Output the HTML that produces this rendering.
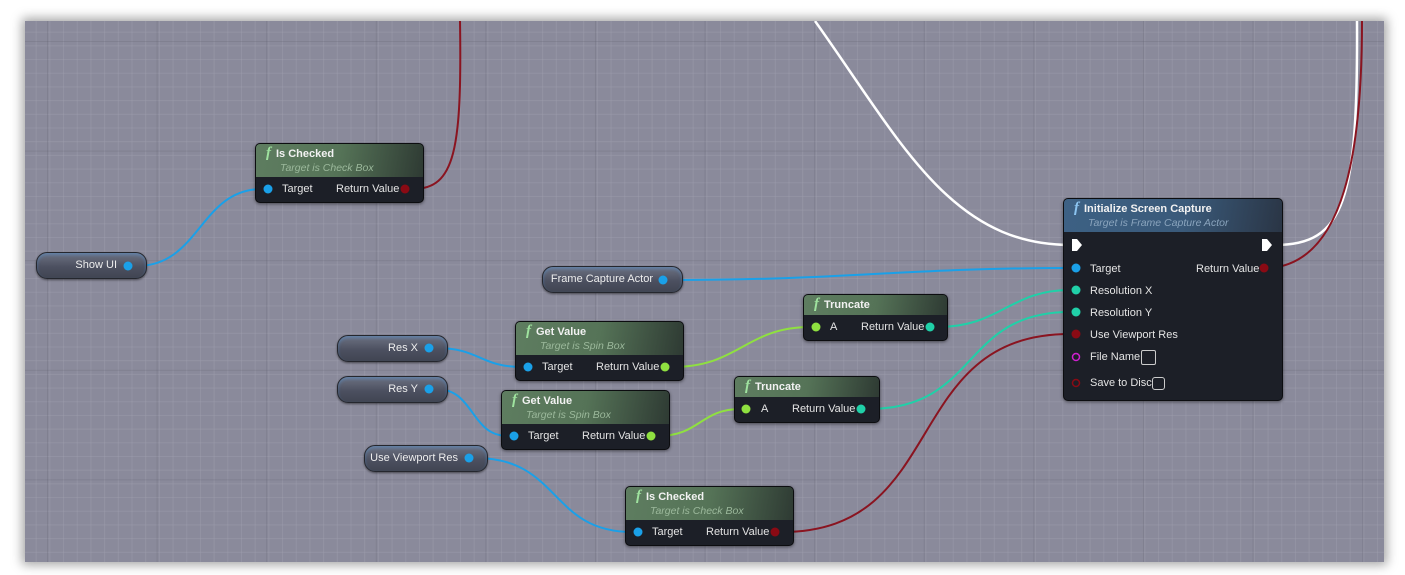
<!DOCTYPE html>
<html><head><meta charset="utf-8"><style>
*{margin:0;padding:0;box-sizing:border-box}
body{width:1405px;height:575px;background:#fff;position:relative;overflow:hidden;font-family:"Liberation Sans",sans-serif}
#cv{position:absolute;left:25px;top:21px;width:1359px;height:541px;background-color:#8a8a9b;
box-shadow:0 0 10px 3px rgba(0,0,0,.35);
background-image:
linear-gradient(to right,rgba(90,90,105,.22) 1px,transparent 1px),
linear-gradient(to bottom,rgba(90,90,105,.22) 1px,transparent 1px),
linear-gradient(to right,rgba(160,160,175,.4) 1px,transparent 1px),
linear-gradient(to bottom,rgba(160,160,175,.4) 1px,transparent 1px);
background-size:109.6px 109.6px,109.6px 109.6px,13.7px 13.7px,13.7px 13.7px;
background-position:22px 0,0 20px,-3px 0,0 -3px;overflow:hidden}
svg{position:absolute;left:0;top:0}
.n{position:absolute;background:#1c1f27;border:1px solid #0c0d10;border-radius:5px;box-shadow:0 1px 3px rgba(0,0,0,.5);color:#e6e6e6;font-size:11px}
.h{border-radius:4px 4px 0 0;background:linear-gradient(100deg,#5e7d60 0%,#557357 50%,#2e3a33 100%);padding:2px 0 0 10px;position:relative}
.h.b{background:linear-gradient(100deg,#3d6184 0%,#3a5a7a 55%,#2a3545 100%)}
.t{font-weight:bold;font-size:11px;color:#f2f2f2;line-height:14px}
.t i{font-family:"Liberation Serif",serif;font-style:italic;color:#9fe39f;font-size:15px;font-weight:bold;margin-right:5px}
.h.b .t i{color:#8cc4f0}
.s{font-style:italic;color:#9bb89b;font-size:10.5px;padding-left:14px;line-height:14px;padding-bottom:2px}
.h.b .s{color:#8aa4bd}
.r{position:absolute;font-size:11px;color:#e4e4e4;white-space:nowrap}
.v{position:absolute;border-radius:11px;border:1px solid #25272e;background:linear-gradient(#6d7282 0%,#4c5060 55%,#414552 100%);box-shadow:0 1px 2px rgba(0,0,0,.5),inset 0 2px 3px rgba(80,160,240,.35);color:#eee;font-size:11px;text-align:right;padding-right:29px;line-height:25px}
</style></head><body>
<div id="cv"></div>
<svg width="1405" height="575" viewBox="0 0 1405 575">
<defs><clipPath id="c"><rect x="25" y="21" width="1359" height="541"/></clipPath></defs>
<g clip-path="url(#c)" fill="none" stroke-width="2">
<path d="M413 189 C455 189 462 150 460 21" stroke="#8a1420"/>
<path d="M137 266 C200 266 200 189 262 189" stroke="#1aa0e8"/>
<path d="M815 21 C900 140 950 245 1070 245" stroke="#fff" stroke-width="2.5"/>
<path d="M1275 245 C1345 245 1358 200 1357 21" stroke="#fff" stroke-width="2.5"/>
<path d="M1270 268 C1345 262 1362 150 1362 21" stroke="#8a1420"/>
<path d="M670 280 C850 280 900 268 1070 268" stroke="#1aa0e8"/>
<path d="M436 348 C480 348 480 367 522 367" stroke="#1aa0e8"/>
<path d="M672 367 C740 367 745 327 811 327" stroke="#8fe040"/>
<path d="M938 327 C1000 327 1010 290 1070 290" stroke="#20d0a8"/>
<path d="M436 389 C475 389 470 436 508 436" stroke="#1aa0e8"/>
<path d="M658 436 C700 436 700 409 741 409" stroke="#8fe040"/>
<path d="M868 409 C980 409 960 312 1070 312" stroke="#20d0a8"/>
<path d="M476 458 C560 458 550 532 632 532" stroke="#1aa0e8"/>
<path d="M782 532 C950 532 900 334 1070 334" stroke="#8a1420"/>
</g>
</svg>

<div class="n" style="left:255px;top:143px;width:169px;height:60px"><div class="h"><div class="t"><i>f</i>Is Checked</div><div class="s">Target is Check Box</div></div>
<span class="r" style="left:26px;top:39px">Target</span><span class="r" style="left:80px;top:39px">Return Value</span></div>
<div class="v" style="left:36px;top:252px;width:111px;height:27px">Show UI</div>
<div class="v" style="left:542px;top:266px;width:141px;height:27px">Frame Capture Actor</div>
<div class="v" style="left:337px;top:335px;width:111px;height:27px">Res X</div>
<div class="v" style="left:337px;top:376px;width:111px;height:27px">Res Y</div>
<div class="v" style="left:364px;top:445px;width:124px;height:27px">Use Viewport Res</div>
<div class="n" style="left:803px;top:294px;width:145px;height:47px"><div class="h" style="padding-bottom:3px"><div class="t"><i>f</i>Truncate</div></div>
<span class="r" style="left:26px;top:26px">A</span><span class="r" style="left:57px;top:26px">Return Value</span></div>
<div class="n" style="left:734px;top:376px;width:146px;height:47px"><div class="h" style="padding-bottom:3px"><div class="t"><i>f</i>Truncate</div></div>
<span class="r" style="left:26px;top:26px">A</span><span class="r" style="left:57px;top:26px">Return Value</span></div>
<div class="n" style="left:515px;top:321px;width:169px;height:60px"><div class="h"><div class="t"><i>f</i>Get Value</div><div class="s">Target is Spin Box</div></div>
<span class="r" style="left:26px;top:39px">Target</span><span class="r" style="left:80px;top:39px">Return Value</span></div>
<div class="n" style="left:501px;top:390px;width:169px;height:60px"><div class="h"><div class="t"><i>f</i>Get Value</div><div class="s">Target is Spin Box</div></div>
<span class="r" style="left:26px;top:39px">Target</span><span class="r" style="left:80px;top:39px">Return Value</span></div>
<div class="n" style="left:625px;top:486px;width:169px;height:60px"><div class="h"><div class="t"><i>f</i>Is Checked</div><div class="s">Target is Check Box</div></div>
<span class="r" style="left:26px;top:39px">Target</span><span class="r" style="left:80px;top:39px">Return Value</span></div>
<div class="n" style="left:1063px;top:198px;width:220px;height:203px"><div class="h b"><div class="t"><i>f</i>Initialize Screen Capture</div><div class="s">Target is Frame Capture Actor</div></div>
<span class="r" style="left:26px;top:64px">Target</span><span class="r" style="left:132px;top:64px">Return Value</span>
<span class="r" style="left:26px;top:86px">Resolution X</span>
<span class="r" style="left:26px;top:108px">Resolution Y</span>
<span class="r" style="left:26px;top:130px">Use Viewport Res</span>
<span class="r" style="left:26px;top:152px">File Name</span>
<span class="r" style="left:26px;top:178px">Save to Disc</span>
<div style="position:absolute;left:77px;top:151px;width:15px;height:15px;border:1px solid #ccc;border-radius:2px"></div>
<div style="position:absolute;left:88px;top:178px;width:13px;height:13px;border:1.5px solid #ccc;border-radius:3px"></div>
</div>

<svg width="1405" height="575" viewBox="0 0 1405 575">
<g>
<path d="M1072 239 h5 l5 6 l-5 6 h-5z" fill="#fff"/>
<path d="M1262 239 h5 l5 6 l-5 6 h-5z" fill="#fff"/>
<g fill="#1aa0e8">
<circle cx="268" cy="189" r="4.5"/><circle cx="128" cy="266" r="4.5"/><circle cx="663" cy="280" r="4.5"/>
<circle cx="429" cy="348" r="4.5"/><circle cx="429" cy="389" r="4.5"/><circle cx="469" cy="458" r="4.5"/>
<circle cx="528" cy="367" r="4.5"/><circle cx="514" cy="436" r="4.5"/><circle cx="638" cy="532" r="4.5"/>
<circle cx="1076" cy="268" r="4.5"/></g>
<g fill="#8fe040"><circle cx="665" cy="367" r="4.5"/><circle cx="651" cy="436" r="4.5"/><circle cx="816" cy="327" r="4.5"/><circle cx="746" cy="409" r="4.5"/></g>
<g fill="#20d0a8"><circle cx="930" cy="327" r="4.5"/><circle cx="861" cy="409" r="4.5"/><circle cx="1076" cy="290" r="4.5"/><circle cx="1076" cy="312" r="4.5"/></g>
<g fill="#8a0a14"><circle cx="405" cy="189" r="4.5"/><circle cx="775" cy="532" r="4.5"/><circle cx="1264" cy="268" r="4.5"/><circle cx="1076" cy="334" r="4.5"/></g>
<circle cx="1076" cy="357" r="3.5" fill="none" stroke="#d020d0" stroke-width="1.5"/>
<circle cx="1076" cy="383" r="3.5" fill="#1c1f27" stroke="#8a0a14" stroke-width="1.5"/>
</g>
</svg>
</body></html>
